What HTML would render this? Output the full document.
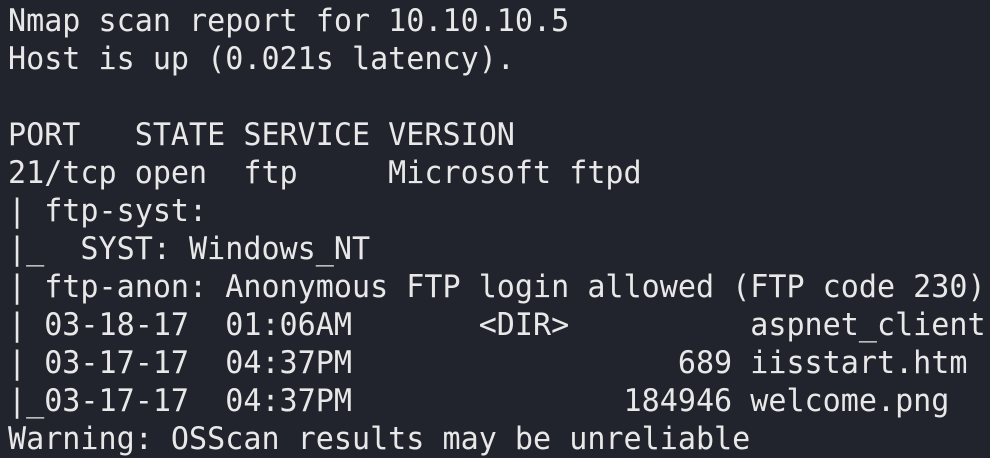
<!DOCTYPE html>
<html><head><meta charset="utf-8"><style>
html,body{margin:0;padding:0;background:#22242d;width:990px;height:432px;overflow:hidden}
pre{margin:0;position:absolute;left:8px;top:2px;font-family:"DejaVu Sans Mono","Liberation Mono",monospace;font-size:31px;letter-spacing:0px;line-height:38px;color:#e8e8e8;white-space:pre;transform:scaleX(0.97);transform-origin:0 0}
</style></head><body>
<pre>Nmap scan report for 10.10.10.5
Host is up (0.021s latency).

PORT   STATE SERVICE VERSION
21/tcp open  ftp     Microsoft ftpd
| ftp-syst:
|_  SYST: Windows_NT
| ftp-anon: Anonymous FTP login allowed (FTP code 230)
| 03-18-17  01:06AM       &lt;DIR&gt;          aspnet_client
| 03-17-17  04:37PM                  689 iisstart.htm
|_03-17-17  04:37PM               184946 welcome.png
Warning: OSScan results may be unreliable</pre>
</body></html>
